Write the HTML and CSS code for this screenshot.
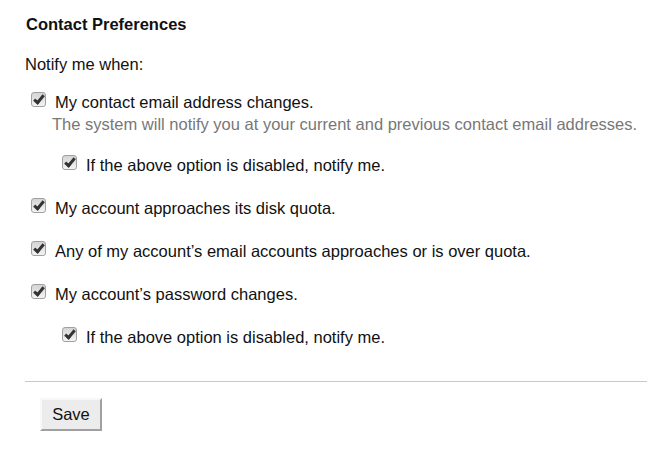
FILE: index.html
```html
<!DOCTYPE html>
<html>
<head>
<meta charset="utf-8">
<link rel="stylesheet" href="styles.css">
</head>
<body>
<div class="page">
  <h2 class="title">Contact Preferences</h2>
  <p class="intro">Notify me when:</p>
  <div class="options">
    <div class="opt">
      <label class="row"><span class="cb"></span><span>My contact email address changes.</span></label>
      <div class="desc">The system will notify you at your current and previous contact email addresses.</div>
      <label class="row sub"><span class="cb"></span><span>If the above option is disabled, notify me.</span></label>
    </div>
    <div class="opt">
      <label class="row"><span class="cb"></span><span>My account approaches its disk quota.</span></label>
    </div>
    <div class="opt">
      <label class="row"><span class="cb"></span><span>Any of my account’s email accounts approaches or is over quota.</span></label>
    </div>
    <div class="opt">
      <label class="row"><span class="cb"></span><span>My account’s password changes.</span></label>
      <label class="row sub"><span class="cb"></span><span>If the above option is disabled, notify me.</span></label>
    </div>
  </div>
  <div class="actions">
    <button class="save">Save</button>
  </div>
</div>
</body>
</html>
```

FILE: styles.css
```css
html, body {
  margin: 0;
  padding: 0;
  background: #fff;
}
body {
  font-family: "Liberation Sans", Arial, sans-serif;
  font-size: 16.5px;
  color: #111;
}
.page {
  padding: 14px 0 0 25px;
}
.title {
  font-size: 16.5px;
  font-weight: bold;
  margin: 0;
  line-height: 20px;
  padding-left: 1px;
}
.intro {
  margin: 20px 0 0 0;
  line-height: 20px;
}
.options {
  display: flex;
  flex-direction: column;
  gap: 21px;
  margin-top: 17px;
}
.opt {
  display: flex;
  flex-direction: column;
}
.row {
  display: flex;
  align-items: center;
  height: 22px;
  line-height: 22px;
  padding-left: 6px;
}
.row.sub {
  padding-left: 37px;
  margin-top: 21px;
}
.desc + .row.sub {
  margin-top: 19px;
}
.cb {
  width: 13px;
  height: 13px;
  border: 1px solid #a0a0a0;
  border-radius: 3px;
  background: linear-gradient(#d4d4d4, #f4f4f4);
  margin-right: 9px;
  margin-top: -5px;
  position: relative;
  flex: none;
}
.cb::after {
  content: "";
  position: absolute;
  left: 4px;
  top: 0px;
  width: 3px;
  height: 8px;
  border-right: 3px solid #333;
  border-bottom: 3px solid #333;
  transform: rotate(40deg);
}
.desc {
  color: #777;
  padding-left: 27px;
  line-height: 22px;
}
.actions {
  margin-top: 33px;
  border-top: 1px solid #c8c8c8;
  padding: 16px 0 0 15px;
}
.save {
  font-family: "Liberation Sans", Arial, sans-serif;
  font-size: 16.5px;
  color: #111;
  background: #ececec;
  border: 2px solid;
  border-color: #f8f8f8 #a0a0a0 #a0a0a0 #f8f8f8;
  padding: 0;
  height: 33px;
  width: 62px;
  border-radius: 0;
}
```
